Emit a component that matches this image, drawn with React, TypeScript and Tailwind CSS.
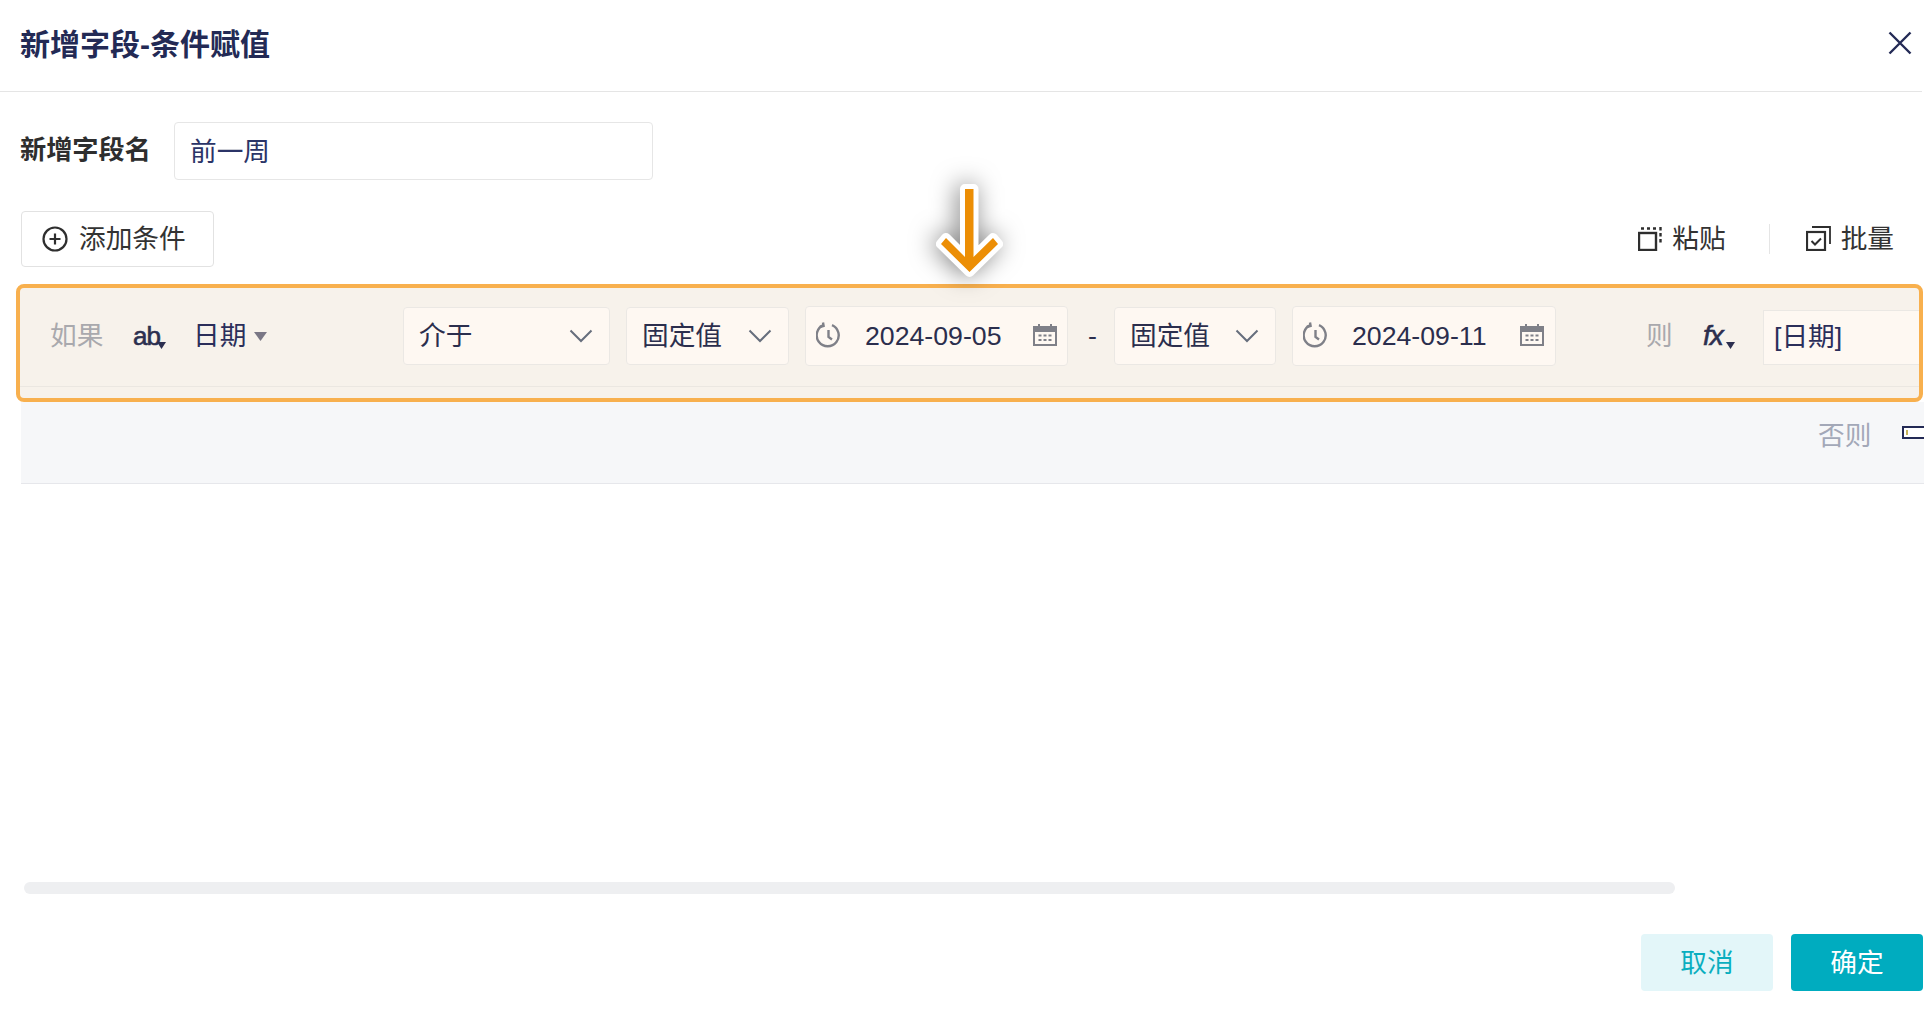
import React from "react"

const FONT = "font-['Liberation_Sans','Noto_Sans_CJK_SC',sans-serif]"

function Chevron() {
  return (
    <svg width="24" height="14" viewBox="0 0 24 14" fill="none" stroke="#666e7c" strokeWidth="2" className="shrink-0">
      <path d="M1.5 1.5 L12 12 L22.5 1.5" />
    </svg>
  )
}

function Caret({ w, h, color }: { w: number; h: number; color: string }) {
  return (
    <svg width={w} height={h} viewBox={`0 0 ${w} ${h}`} className="shrink-0">
      <path d={`M0 0 H${w} L${w / 2} ${h} Z`} fill={color} />
    </svg>
  )
}

function ClockIcon() {
  return (
    <svg width="25" height="26" viewBox="0 0 25 26" fill="none" stroke="#7f8088" strokeWidth="2.4" className="shrink-0 mb-[2px]">
      <path d="M16 3.2 A11 11 0 1 1 7.4 3.2" />
      <path d="M7 0.5 L7.6 3.8 L3.8 5" />
      <path d="M12.5 8 V15 L16 17.5" />
    </svg>
  )
}

function CalendarIcon() {
  return (
    <svg width="24" height="22" viewBox="0 0 24 22" fill="none" className="shrink-0 mb-[2px]">
      <rect x="1" y="3" width="22" height="18" stroke="#7f8088" strokeWidth="2" />
      <rect x="1" y="3" width="22" height="5" fill="#7f8088" />
      <path d="M6 0 V4 M18 0 V4" stroke="#7f8088" strokeWidth="2" />
      <path d="M5.5 11.5 H8.5 M10.5 11.5 H13.5 M15.5 11.5 H18.5 M5.5 16 H8.5 M10.5 16 H13.5 M15.5 16 H18.5" stroke="#7f8088" strokeWidth="2" />
    </svg>
  )
}

function SelectBox({ label, width, ml }: { label: string; width: string; ml: string }) {
  return (
    <div className={`${width} ${ml} pl-[15px] pr-[16px] h-[58px] shrink-0 flex items-center justify-between bg-[#fef8f2] border border-[#ebe8e4] rounded text-[26.7px] text-[#2b2e4d]`}>
      <span className="pt-[1px]">{label}</span>
      <Chevron />
    </div>
  )
}

function DateBox({ value, ml, width }: { value: string; ml: string; width: string }) {
  return (
    <div className={`${ml} ${width} h-[60px] shrink-0 flex items-center pl-[10px] bg-[#fef8f2] border border-[#ebe8e4] rounded text-[26.7px] text-[#2b2e4d]`}>
      <ClockIcon />
      <span className="ml-[24px] w-[168px]">{value}</span>
      <CalendarIcon />
    </div>
  )
}

export default function App() {
  return (
    <div className={`${FONT} relative w-[1924px] h-[1013px] overflow-hidden bg-white`}>
      {/* Titlu */}
      <div className="h-[92px] flex items-center justify-between pl-[20px] pr-[10px] mr-[2px] border-b border-[#e5e5e5]">
        <h1 className="mb-[2px] text-[30px] font-bold text-[#232a55]">新增字段-条件赋值</h1>
        <svg width="24" height="24" viewBox="0 0 24 24" stroke="#232a55" strokeWidth="2.4" fill="none" className="mb-[6px]">
          <path d="M1.5 1.5 L22.5 22.5 M22.5 1.5 L1.5 22.5" />
        </svg>
      </div>

      {/* Nume camp */}
      <div className="mt-[30px] ml-[20px] flex items-center">
        <label className="w-[154px] text-[26.2px] font-bold text-[#2e2e2e]">新增字段名</label>
        <div className="w-[479px] h-[58px] flex items-center pl-[15px] pt-[2px] bg-white border border-[#e6e6e6] rounded text-[26.7px] text-[#2b3467]">
          前一周
        </div>
      </div>

      {/* Toolbar */}
      <div className="mt-[31px] pl-[21px] pr-[30px] h-[56px] flex items-center justify-between text-[26.7px] text-[#333333]">
        <button className="w-[193px] h-[56px] flex items-center pl-[20px] bg-white border border-[#e2e2e2] rounded">
          <svg width="26" height="26" viewBox="0 0 26 26" fill="none" stroke="#2e2e2e" strokeWidth="2.2" className="shrink-0">
            <circle cx="13" cy="13" r="11.5" />
            <path d="M13 7.5 V18.5 M7.5 13 H18.5" />
          </svg>
          <span className="ml-[11px] pt-[1px]">添加条件</span>
        </button>
        <div className="flex items-center">
          <svg width="24" height="24" viewBox="0 0 24 24" fill="none" className="shrink-0">
            <rect x="1" y="6" width="17" height="17" stroke="#2e2e2e" strokeWidth="2.4" />
            <path d="M3 1.5 H6 M9 1.5 H12 M15 1.5 H18 M22.5 0 V3.5 M22.5 6 V9.5 M22.5 12 V15.5" stroke="#2e2e2e" strokeWidth="2.4" />
          </svg>
          <span className="ml-[10px] pt-[1px]">粘贴</span>
          <div className="w-px h-[30px] ml-[43px] bg-[#e5e5e5]" />
          <svg width="25" height="25" viewBox="0 0 25 25" fill="none" className="ml-[36px] shrink-0">
            <rect x="1" y="6" width="18" height="18" stroke="#2e2e2e" strokeWidth="2.2" />
            <path d="M6 1 H24 V18" stroke="#2e2e2e" strokeWidth="1.8" />
            <path d="M5.5 15 L9 18.5 L15 12.5" stroke="#2e2e2e" strokeWidth="2" />
          </svg>
          <span className="ml-[10px] pt-[1px]">批量</span>
        </div>
      </div>

      {/* Rand conditie evidentiat */}
      <div className="mt-[17px] ml-[16px] w-[1907px] h-[118px] border-4 border-[#f8b04e] rounded-lg bg-[#f7f2eb] overflow-hidden">
        <div className="h-[99px] pt-[19px] border-b border-[#ebe7e1]">
          <div className="h-[58px] flex items-center whitespace-nowrap">
            <span className="w-[54px] ml-[30px] pt-[1px] text-[26.7px] text-[#a9a9ad] shrink-0">如果</span>
            <span className="w-[26px] ml-[29px] text-[26px] tracking-[-1px] [-webkit-text-stroke:0.6px_#2c2f4f] text-[#2c2f4f] shrink-0">ab</span>
            <span className="mt-[19px] ml-[-2px] shrink-0"><Caret w={9} h={7} color="#2c2f4f" /></span>
            <span className="w-[54px] ml-[27px] text-[26.7px] text-[#2b2e5a] shrink-0">日期</span>
            <span className="ml-[7px] shrink-0"><Caret w={13} h={9} color="#7a7785" /></span>
            <SelectBox label="介于" width="w-[207px]" ml="ml-[136px]" />
            <SelectBox label="固定值" width="w-[163px]" ml="ml-[16px]" />
            <DateBox value="2024-09-05" ml="ml-[16px]" width="w-[263px]" />
            <span className="ml-[20px] w-[26px] text-[26.7px] text-[#2b2e4d] shrink-0">-</span>
            <SelectBox label="固定值" width="w-[162px]" ml="ml-0" />
            <DateBox value="2024-09-11" ml="ml-[16px]" width="w-[264px]" />
            <span className="w-[27px] ml-[90px] pt-[1px] text-[26.7px] text-[#a9a9ad] shrink-0">则</span>
            <span className="w-[24px] ml-[30px] text-[28px] italic tracking-[-1px] [-webkit-text-stroke:0.6px_#2c2f4f] text-[#2c2f4f] shrink-0">fx</span>
            <span className="mt-[19px] ml-[-1px] shrink-0"><Caret w={9} h={7} color="#2c2f4f" /></span>
            <div className="ml-[28px] w-[300px] h-[55px] mt-[3px] flex items-center pl-[10px] bg-[#fef8f2] border border-[#ebe8e4] text-[26.7px] text-[#2b2e5a] shrink-0">
              [日期]
            </div>
          </div>
        </div>
      </div>

      {/* Rand altfel */}
      <div className="ml-[21px] h-[82px] bg-[#f6f7f9] border-b border-[#e6e7eb] overflow-hidden flex items-start pl-[1797px]">
        <span className="mt-[14px] text-[26.7px] text-[#a3a8b8] shrink-0">否则</span>
        <div className="mt-[24px] ml-[31px] w-[60px] h-[13px] border-2 border-[#232a55] pl-[2px] pt-[2px] bg-white shrink-0">
          <div className="w-[2px] h-[5px] bg-[#c8b45a]" />
        </div>
      </div>

      {/* Scrollbar */}
      <div className="mt-[398px] ml-[24px] w-[1651px] h-[12px] rounded-full bg-[#eeeff1]" />

      {/* Butoane */}
      <div className="mt-[40px] pr-[1px] flex justify-end gap-[18px] text-[26.7px]">
        <button className="w-[132px] h-[57px] pt-[2px] rounded bg-[#e3f6f9] text-[#0aaebf]">取消</button>
        <button className="w-[132px] h-[57px] pt-[2px] rounded bg-[#00acbf] text-white">确定</button>
      </div>

      {/* Sageata peste continut */}
      <svg width="100" height="108" viewBox="0 0 100 108" className="absolute left-[925px] top-[176px] drop-shadow-[-3px_0px_12px_rgba(0,0,0,0.5)]">
        <path
          d="M40 13 H48.5 V81 L68 62 L73 68 L44.5 96 L16 68 L21 62 L40 81 Z"
          fill="#ec8e05"
          stroke="#ffffff"
          strokeWidth="10"
          strokeLinejoin="round"
          paintOrder="stroke"
        />
      </svg>
    </div>
  )
}
